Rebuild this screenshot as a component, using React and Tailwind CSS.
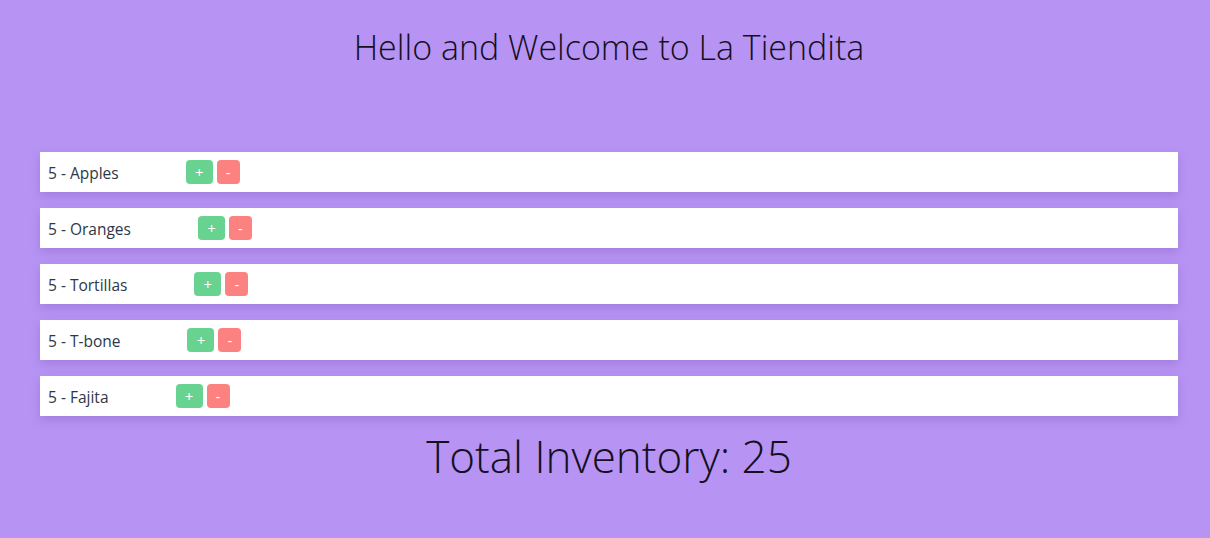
import React, { useState } from 'react';

const initialItems = [
    { name: 'Apples', qty: 5 },
    { name: 'Oranges', qty: 5 },
    { name: 'Tortillas', qty: 5 },
    { name: 'T-bone', qty: 5 },
    { name: 'Fajita', qty: 5 },
];

const App = () => {
    const [items, setItems] = useState(initialItems);

    const change = (index, delta) => {
        setItems(items.map((item, i) => (i === index ? { ...item, qty: Math.max(0, item.qty + delta) } : item)));
    };

    const total = items.reduce((sum, item) => sum + item.qty, 0);

    return (
        <div className="min-h-screen bg-[#b794f4]" style={{ fontFamily: '"Open Sans", "Noto Sans", sans-serif' }}>
            <div className="ml-10 mr-8 pt-[20px]">
                <h1 className="text-center text-[34px] leading-[54px] font-light text-[#14101f]">
                    Hello and Welcome to La Tiendita
                </h1>

                {/* Inventory list */}
                <div className="mt-[78px] flex flex-col gap-4">
                    {items.map((item, i) => (
                        <div key={item.name} className="flex items-center h-10 bg-white px-2 shadow-[0_4px_10px_rgba(60,20,120,0.18)]">
                            <span className="pt-[3px] text-[15.5px] text-[#2d3748]">{item.qty} - {item.name}</span>
                            <div className="ml-[67px] flex gap-1">
                                <button
                                    onClick={() => change(i, 1)}
                                    className="h-6 w-[27px] rounded bg-[#68d391] text-white text-[15px] leading-none"
                                >
                                    +
                                </button>
                                <button
                                    onClick={() => change(i, -1)}
                                    className="h-6 w-[23px] rounded bg-[#fc8181] text-white text-[15px] leading-none"
                                >
                                    -
                                </button>
                            </div>
                        </div>
                    ))}
                </div>

                <h2 className="mt-1 text-center text-[44px] leading-[72px] font-light text-[#14101f]">
                    Total Inventory: {total}
                </h2>
            </div>
        </div>
    );
};

export default App;
